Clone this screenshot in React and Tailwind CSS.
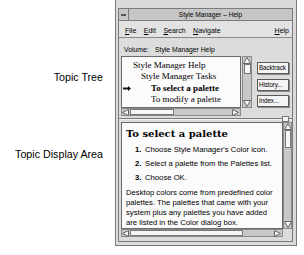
import React from "react";

const Arrow = ({ dir }) => {
    const pts = {
        up: "4,0.5 7.5,6.5 0.5,6.5",
        down: "0.5,0.5 7.5,0.5 4,6.5",
        left: "0.5,3.5 6.5,0.5 6.5,6.5",
        right: "0.5,0.5 6.5,3.5 0.5,6.5",
    }[dir];
    return (
        <svg width="8" height="7" viewBox="0 0 8 7" className="block shrink-0">
            <polygon points={pts} fill="#f6f6f6" stroke="#666" strokeWidth="1" />
        </svg>
    );
};

const Mnemonic = ({ first, rest }) => (
    <span>
        <span className="underline underline-offset-1">{first}</span>
        {rest}
    </span>
);

const ToolButton = ({ label, className }) => (
    <div className={"h-[12px] w-[32px] border border-[#5a5a5a] bg-[#f4f4f4] shadow-[1px_1px_0_#8a8a8a] pl-[1px] leading-[10px] text-[6.3px] tracking-[-0.1px] whitespace-nowrap overflow-hidden " + className}>
        {label}
    </div>
);

const App = () => {
    return (
        <div className="w-[304px] h-[255px] bg-white flex overflow-hidden font-['Liberation_Sans',Arial,sans-serif] text-black">
            {/* callout labels */}
            <div className="w-[115px] shrink-0 pr-[12px] text-right text-[10.7px] leading-[14px]">
                <div className="pt-[70px]">Topic Tree</div>
                <div className="mt-[63px]">Topic Display Area</div>
            </div>

            {/* help window */}
            <div className="relative w-[182px] h-[247px] mt-[-1px] shrink-0 border border-[#7a7a7a] bg-[#dadada] pt-[8px] pl-[2px] pr-[3px] pb-[3px]">
                <div className="border border-[#7a7a7a] bg-[#dcdcdc]">
                    {/* title bar */}
                    <div className="h-[12px] flex bg-[#c6c6c6] border-b border-[#7a7a7a]">
                        <div className="w-[10px] h-full border-r border-[#7a7a7a] flex items-center justify-center">
                            <div className="w-[5px] h-[2px] border border-[#555] bg-white"></div>
                        </div>
                        <div className="flex-1 text-center text-[6.6px] leading-[11px]">Style Manager – Help</div>
                    </div>

                    {/* menu bar */}
                    <div className="h-[17px] flex pl-[6px] pr-[3px] pt-[5px] gap-[7.5px] text-[7px] leading-[9px] border-b border-[#8a8a8a] bg-[#e2e2e2]">
                        <Mnemonic first="F" rest="ile" />
                        <Mnemonic first="E" rest="dit" />
                        <Mnemonic first="S" rest="earch" />
                        <Mnemonic first="N" rest="avigate" />
                        <div className="flex-1"></div>
                        <Mnemonic first="H" rest="elp" />
                    </div>

                    {/* topic tree pane */}
                    <div className="h-[80px] pt-[7px] pl-[2px]">
                        <div className="h-[9px] flex text-[6.8px] leading-[9px] pl-[3px]">
                            <span className="w-[31px]">Volume:</span>
                            <span>Style Manager Help</span>
                        </div>
                        <div className="flex mt-[2px]">
                            <div>
                                <div className="w-[120px] h-[52px] border border-[#6a6a6a] bg-[#fbfbfb] pt-[3px] font-['Liberation_Serif',serif] text-[9px] leading-[11.4px]">
                                    <div className="pl-[11px]">Style Manager Help</div>
                                    <div className="pl-[19px]">Style Manager Tasks</div>
                                    <div className="flex items-center">
                                        <svg width="8" height="5" viewBox="0 0 8 5" className="ml-[1px] mr-[20px]">
                                            <path d="M0 1.5h5V0l3 2.5-3 2.5V3.5H0z" fill="#111" />
                                        </svg>
                                        <span className="font-bold">To select a palette</span>
                                    </div>
                                    <div className="pl-[29px]">To modify a palette</div>
                                </div>
                                <div className="w-[120px] h-[8px] flex items-center border border-[#8a8a8a] bg-[#c8c8c8]">
                                    <Arrow dir="left" />
                                    <div className="w-[44px] h-[6px] bg-[#f6f6f6] border border-[#777]"></div>
                                    <div className="flex-1"></div>
                                    <Arrow dir="right" />
                                </div>
                            </div>
                            <div className="w-[10px] h-[52px] ml-[1px] flex flex-col items-center border border-[#8a8a8a] bg-[#c8c8c8]">
                                <Arrow dir="up" />
                                <div className="w-[7px] h-[10px] bg-[#f6f6f6] border border-[#777]"></div>
                                <div className="flex-1"></div>
                                <Arrow dir="down" />
                            </div>
                            <div className="ml-[5px] pt-[6px]">
                                <ToolButton label="Backtrack" />
                                <ToolButton label="History..." className="mt-[5px]" />
                                <ToolButton label="Index..." className="mt-[4px]" />
                            </div>
                        </div>
                    </div>

                    {/* pane sash */}
                    <div className="relative h-[2px] border-t border-[#7a7a7a] bg-[#f2f2f2]">
                        <div className="absolute left-[163px] top-[-3px] w-[7px] h-[6px] border border-[#777] bg-[#f4f4f4]"></div>
                    </div>

                    {/* topic display pane */}
                    <div className="h-[121px] pt-[2px] pl-[2px]">
                        <div className="flex">
                            <div className="w-[162px] h-[107px] border border-[#6a6a6a] bg-[#fbfbfb] pl-[4px] pt-[4px]">
                                <div className="font-['DejaVu_Serif',serif] font-bold text-[10px] leading-[14px]">To select a palette</div>
                                <div className="mt-[2px] text-[7.7px] leading-[14px]">
                                    <div className="flex"><span className="w-[10px] pl-[9px] box-content font-bold">1.</span><span>Choose Style Manager's Color icon.</span></div>
                                    <div className="flex"><span className="w-[10px] pl-[9px] box-content font-bold">2.</span><span>Select a palette from the Palettes list.</span></div>
                                    <div className="flex"><span className="w-[10px] pl-[9px] box-content font-bold">3.</span><span>Choose OK.</span></div>
                                </div>
                                <p className="mt-[3px] w-[150px] text-[7.7px] leading-[10px]">
                                    Desktop colors come from predefined color palettes. The palettes that came with your system plus any palettes you have added are listed in the Color dialog box.
                                </p>
                            </div>
                            <div className="w-[9px] h-[107px] flex flex-col items-center border border-[#8a8a8a] bg-[#c8c8c8]">
                                <Arrow dir="up" />
                                <div className="w-[6px] h-[18px] bg-[#f6f6f6] border border-[#777]"></div>
                                <div className="flex-1"></div>
                                <Arrow dir="down" />
                            </div>
                        </div>
                        <div className="w-[162px] h-[8px] flex items-center border border-[#8a8a8a] bg-[#c8c8c8]">
                            <Arrow dir="left" />
                            <div className="w-[113px] h-[6px] bg-[#f6f6f6] border border-[#777]"></div>
                            <div className="flex-1"></div>
                            <Arrow dir="right" />
                        </div>
                    </div>
                </div>
            </div>
        </div>
    );
};

export default App;
